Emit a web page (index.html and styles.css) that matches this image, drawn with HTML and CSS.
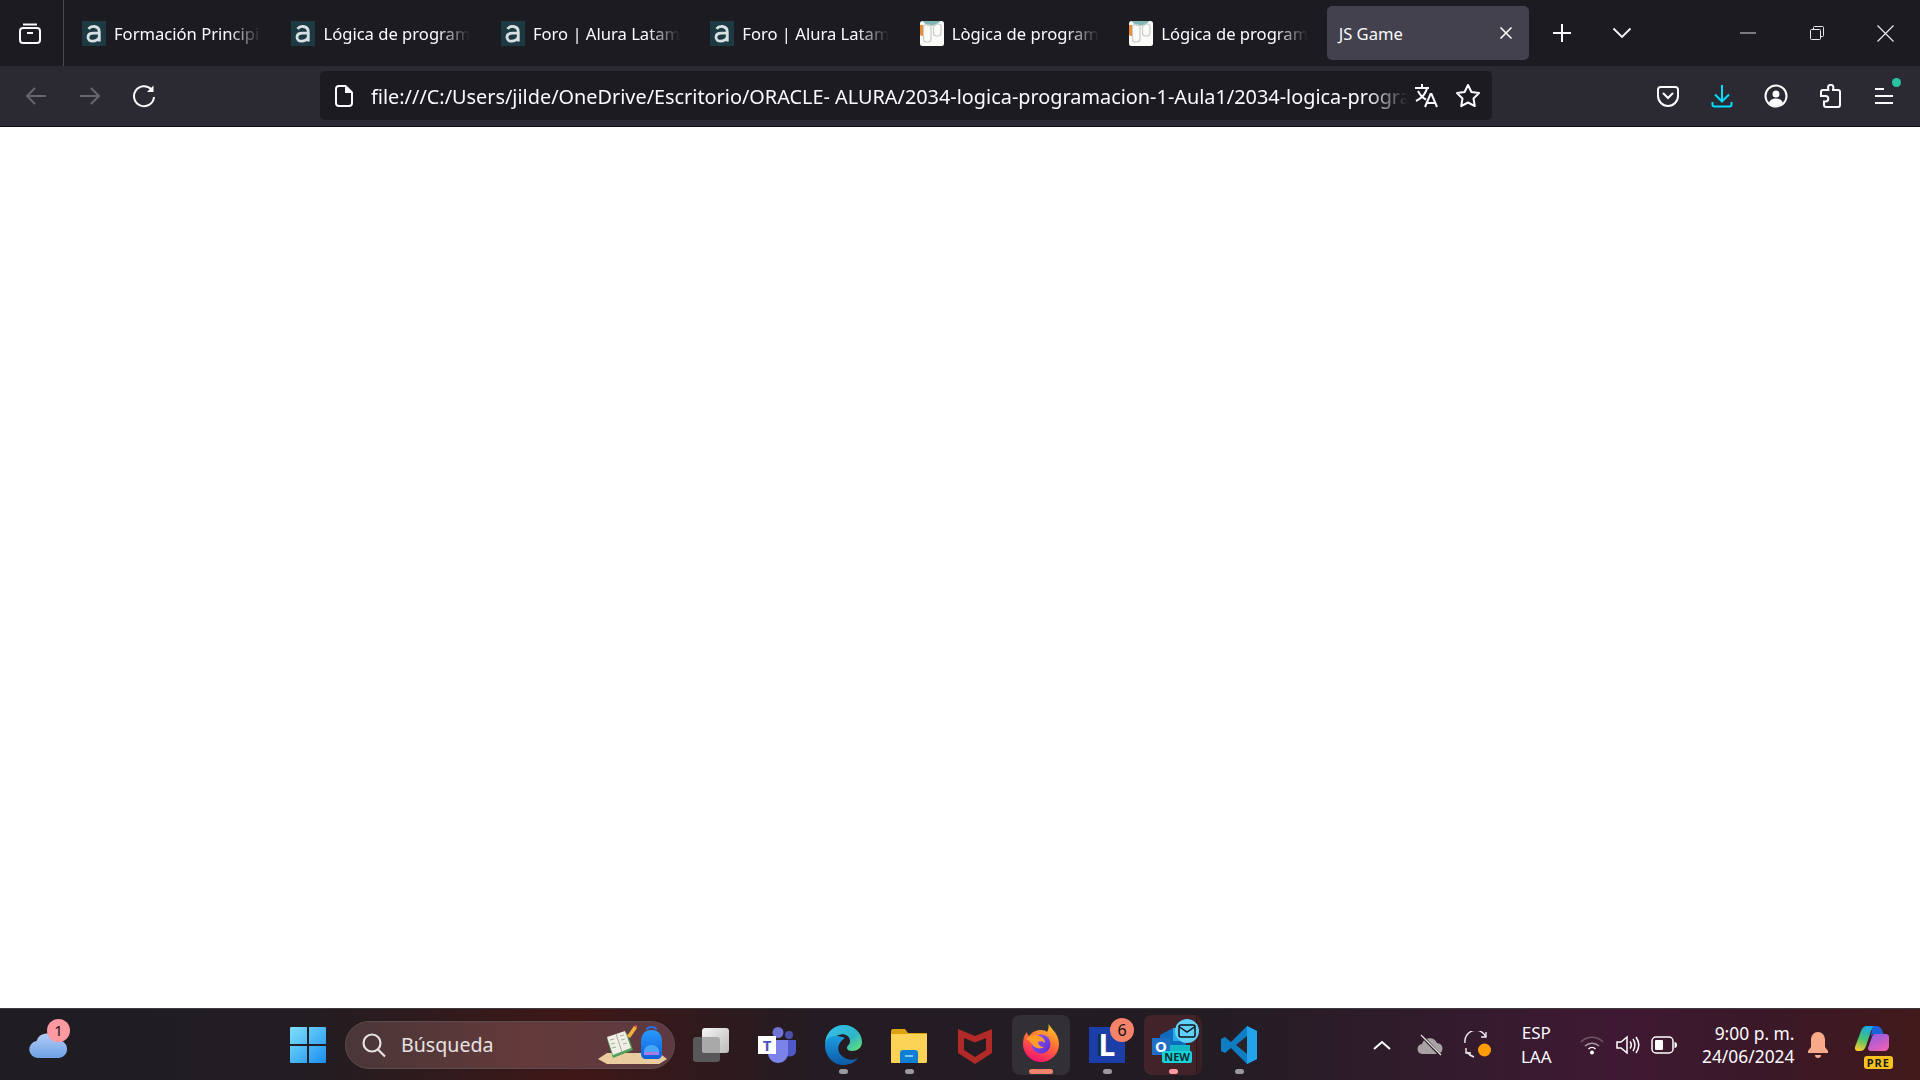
FILE: index.html
```html
<!DOCTYPE html>
<html lang="es">
<head>
    <meta charset="UTF-8">
    <meta name="viewport" content="width=device-width, initial-scale=1.0">
    <title>JS Game</title>
    <link rel="stylesheet" href="styles.css">
</head>
<body>
    <svg class="defs" width="0" height="0">
        <symbol id="alura" viewBox="0 0 24 25">
            <rect width="24" height="25" fill="#1d3a42"/>
            <path d="M6.500 7.800C8 6 10.200 5.300 12.300 5.500c3.200.3 5 2.200 5 5.500v9.500M17.300 12.200H11.500c-3.300 0-5.500 1.500-5.500 4 0 2.500 2 4 4.500 4 3 0 6.800-1.800 6.800-5" fill="none" stroke="#d6e0e2" stroke-width="2.800"/>
        </symbol>
        <symbol id="course" viewBox="0 0 24 25">
            <rect width="24" height="25" rx="2.500" fill="#fbfbf8"/>
            <path d="M2.500 0h18l-5 4.500h-8.500z" fill="#7fb5b5"/>
            <path d="M0 4h3v11H2a2 2 0 0 1-2-2z" fill="#e98a35"/>
            <rect x="3.500" y="3.500" width="7.500" height="17.500" rx="3" fill="none" stroke="#c9cccb" stroke-width="1.200"/>
            <rect x="13.500" y="3" width="7.500" height="12" rx="3" fill="none" stroke="#c9cccb" stroke-width="1.200"/>
        </symbol>
    </svg>

    <header class="tabbar">
        <div class="tabs-view">
            <svg width="24" height="24" viewBox="0 0 24 24" fill="none" stroke="#fbfbfe" stroke-width="2"><path d="M5 3.500h14"/><rect x="2" y="7" width="20" height="15" rx="3"/><path d="M9 12h6"/></svg>
        </div>
        <div class="tabs">
            <div class="tab"><svg class="favicon"><use href="#alura"/></svg><span class="tab-label">Formación Principiante</span></div>
            <div class="tab"><svg class="favicon"><use href="#alura"/></svg><span class="tab-label">Lógica de programación</span></div>
            <div class="tab"><svg class="favicon"><use href="#alura"/></svg><span class="tab-label">Foro | Alura Latam</span></div>
            <div class="tab"><svg class="favicon"><use href="#alura"/></svg><span class="tab-label">Foro | Alura Latam</span></div>
            <div class="tab"><svg class="favicon"><use href="#course"/></svg><span class="tab-label">Lògica de programación</span></div>
            <div class="tab"><svg class="favicon"><use href="#course"/></svg><span class="tab-label">Lógica de programación</span></div>
            <div class="tab tab-active">
                <span class="tab-title">JS Game</span>
                <svg width="14" height="14" viewBox="0 0 14 14" stroke="#fbfbfe" stroke-width="1.600"><path d="M1.500 1.500l11 11M12.500 1.500l-11 11"/></svg>
            </div>
        </div>
        <div class="tab-btn tab-btn-new">
            <svg width="20" height="20" viewBox="0 0 20 20" stroke="#fbfbfe" stroke-width="2"><path d="M10 1v18M1 10h18"/></svg>
        </div>
        <div class="tab-btn tab-btn-list">
            <svg width="20" height="12" viewBox="0 0 20 12" fill="none" stroke="#fbfbfe" stroke-width="1.800"><path d="M1.500 1.500l8.500 8.500 8.500-8.500"/></svg>
        </div>
        <div class="window-controls">
            <div class="win-btn"><svg width="16" height="2" viewBox="0 0 16 2" stroke="#d8d8da"><path d="M0 1h16"/></svg></div>
            <div class="win-btn"><svg width="16" height="16" viewBox="0 0 16 16" fill="none" stroke="#e8e8ea"><rect x="1.500" y="4.500" width="10" height="10" rx="1"/><path d="M4.500 4.500v-2a1 1 0 0 1 1-1h8a1 1 0 0 1 1 1v8a1 1 0 0 1-1 1h-2"/></svg></div>
            <div class="win-btn"><svg width="17" height="17" viewBox="0 0 17 17" stroke="#f0f0f2" stroke-width="1.100"><path d="M.5.500l16 16M16.500.500l-16 16"/></svg></div>
        </div>
    </header>

    <nav class="toolbar">
        <div class="tool-btn">
            <svg width="22" height="20" viewBox="0 0 22 20" fill="none" stroke="#66666c" stroke-width="2"><path d="M21 10H2M10 2l-8 8 8 8"/></svg>
        </div>
        <div class="tool-btn">
            <svg width="22" height="20" viewBox="0 0 22 20" fill="none" stroke="#66666c" stroke-width="2"><path d="M1 10h19M12 2l8 8-8 8"/></svg>
        </div>
        <div class="tool-btn">
            <svg width="24" height="24" viewBox="0 0 24 24" fill="none" stroke="#fbfbfe" stroke-width="2"><path d="M19.500 5.500A10 10 0 1 0 22 13"/><path d="M21.500 1.500v6.500h-6.500z" fill="#fbfbfe" stroke="none"/></svg>
        </div>
        <div class="urlbar">
            <svg class="url-page" width="18" height="22" viewBox="0 0 18 22" fill="none" stroke="#fbfbfe" stroke-width="2"><path d="M4 1h6.500L17 7.500V18a3 3 0 0 1-3 3H4a3 3 0 0 1-3-3V4a3 3 0 0 1 3-3z"/><path d="M10 1v7h7" fill="#fbfbfe" stroke="none"/></svg>
            <span class="url-text">file:///C:/Users/jilde/OneDrive/Escritorio/ORACLE- ALURA/2034-logica-programacion-1-Aula1/2034-logica-programacion-1-Aula1/index.html</span>
            <svg class="url-translate" width="25" height="25" viewBox="0 0 25 25" fill="none" stroke="#fbfbfe" stroke-width="2"><path d="M1 5h14M8 1v4M13 5c-1 5-5 10-11 13M4 8c2 4 5 7 8 8.500M11 24l5.500-13h1L23 24M13 20h8"/></svg>
            <svg class="url-star" width="26" height="25" viewBox="0 0 26 25" fill="none" stroke="#fbfbfe" stroke-width="2" stroke-linejoin="round"><path d="M13 2l3.400 7 7.600 1.100-5.500 5.400 1.300 7.600-6.800-3.600-6.800 3.600 1.300-7.600L2 10.100 9.600 9z"/></svg>
        </div>
        <div class="tool-actions">
            <div class="tool-btn">
                <svg width="22" height="22" viewBox="0 0 22 22" fill="none" stroke="#fbfbfe" stroke-width="2"><path d="M3.500 2h15A2.500 2.500 0 0 1 21 4.500V11a10 10 0 0 1-20 0V4.500A2.500 2.500 0 0 1 3.500 2z"/><path d="M6.500 8.500L11 13l4.500-4.500" stroke-linecap="round"/></svg>
            </div>
            <div class="tool-btn">
                <svg width="22" height="24" viewBox="0 0 22 24" fill="none" stroke="#00ddff" stroke-width="2"><path d="M11 1v16M4 10.500l7 7 7-7"/><path d="M1.500 18v2.500a2 2 0 0 0 2 2h15a2 2 0 0 0 2-2V18"/></svg>
            </div>
            <div class="tool-btn">
                <svg width="24" height="24" viewBox="0 0 24 24" fill="none" stroke="#fbfbfe" stroke-width="2"><circle cx="12" cy="12" r="10.500"/><circle cx="12" cy="10" r="3.500" fill="#fbfbfe" stroke="none"/><path d="M5 19c1-3.500 4-4.500 7-4.500s6 1 7 4.500c-2 2-4.500 3-7 3s-5-1-7-3z" fill="#fbfbfe" stroke="none"/></svg>
            </div>
            <div class="tool-btn">
                <svg width="22" height="24" viewBox="0 0 22 24" fill="none" stroke="#fbfbfe" stroke-width="2"><path d="M9 3.500a2.700 2.700 0 0 1 5.400 0c0 1-.4 1.500-.4 2.500h5a2 2 0 0 1 2 2v13a2 2 0 0 1-2 2H7a2 2 0 0 1-2-2v-3.500h1.500a2.700 2.700 0 0 0 0-5.500H2v-4a2 2 0 0 1 2-2h5.400c0-1-.4-1.500-.4-2.500z"/></svg>
            </div>
            <div class="tool-btn menu-btn">
                <svg width="20" height="18" viewBox="0 0 20 18" stroke="#fbfbfe" stroke-width="2"><path d="M1 2h9M1 9h18M1 16h18"/></svg>
                <span class="menu-dot"></span>
            </div>
        </div>
    </nav>

    <main class="viewport"></main>

    <footer class="taskbar">
        <div class="weather">
            <svg width="38" height="26" viewBox="0 0 38 26"><defs><linearGradient id="cloud" x1="0" y1="0" x2="0" y2="1"><stop offset="0" stop-color="#b4ccf5"/><stop offset="1" stop-color="#6ea1e6"/></linearGradient></defs><path d="M9 26a8.500 8.500 0 0 1-1.500-16.900A11 11 0 0 1 28 8a9 9 0 0 1 2 18z" fill="url(#cloud)"/></svg>
            <span class="weather-badge">1</span>
        </div>
        <div class="task-btn task-start">
            <svg width="36" height="36" viewBox="0 0 36 36"><defs><linearGradient id="win" x1="0" y1="0" x2="1" y2="1"><stop offset="0" stop-color="#7fe0fb"/><stop offset="1" stop-color="#1a8ff0"/></linearGradient></defs><path d="M1 0h16v17H0V1a1 1 0 0 1 1-1zM19 0h16a1 1 0 0 1 1 1v16H19zM0 19h17v17H1a1 1 0 0 1-1-1zM19 19h17v16a1 1 0 0 1-1 1H19z" fill="url(#win)"/></svg>
        </div>
        <div class="search">
            <svg width="26" height="26" viewBox="0 0 26 26" fill="none" stroke="#e8e2e2" stroke-width="2.200"><circle cx="11" cy="11" r="8.500"/><path d="M17 17.500l7 7"/></svg>
            <span class="search-label">Búsqueda</span>
            <svg class="search-art" width="72" height="42" viewBox="0 0 72 42">
                <defs><linearGradient id="bag" x1="0" y1="0" x2="0" y2="1"><stop offset="0" stop-color="#2a9bff"/><stop offset="1" stop-color="#0e5ed8"/></linearGradient></defs>
                <path d="M1 35l9-6h52l8 6-8 5H10z" fill="#e9cd9e"/>
                <path d="M10 15l20-6 6 17-20 8z" fill="#4ea05a"/>
                <path d="M10 13l18-6 6 17-18 7z" fill="#f1eee6"/>
                <path d="M19 10l6 18M13 16l4-1M14 20l4-1M15 24l4-1M23 12l4-1M24 16l4-1M26 20l4-1" stroke="#a8aaa4" fill="none"/>
                <path d="M30 12l7-10 3 2-7 10z" fill="#f5b13d"/>
                <path d="M37 2l3-1v3z" fill="#e25c4a"/>
                <path d="M50 6c0-4 9-4 9 0" fill="none" stroke="#2a6fe0" stroke-width="2"/>
                <path d="M44 18c0-8 4-12 10.500-12S65 10 65 18v12c0 3-2 5-5 5H49c-3 0-5-2-5-5z" fill="url(#bag)"/>
                <path d="M47 27c1-8 14-8 15 0v2H47z" fill="#46a6f7"/>
                <path d="M47 28h15v3H47z" fill="#a77be8"/>
            </svg>
        </div>
        <div class="task-btn task-first">
            <svg width="36" height="34" viewBox="0 0 36 34"><defs><linearGradient id="tview" x1="0" y1="0" x2="1" y2="1"><stop offset="0" stop-color="#f4f4f4"/><stop offset="1" stop-color="#bcbcbc"/></linearGradient></defs><rect x="0" y="9" width="27" height="25" rx="3" fill="#58585a"/><rect x="9" y="0" width="27" height="25" rx="3" fill="url(#tview)"/><path d="M9 9h15a3 3 0 0 1 3 3v13H12a3 3 0 0 1-3-3z" fill="#a9a9a9"/></svg>
        </div>
        <div class="task-btn">
            <svg width="38" height="36" viewBox="0 0 38 36"><circle cx="20" cy="5.500" r="5.500" fill="#6f73d2"/><circle cx="31" cy="8" r="4" fill="#4a4fb0"/><path d="M28 13h10v11a6 6 0 0 1-10 4z" fill="#5059c9"/><path d="M10 13h20v13a9.500 9.500 0 0 1-9.500 10C15 36 10 32 10 26z" fill="#7b83eb"/><rect x="0" y="9" width="18" height="18" fill="#fff"/><text class="teams-t" x="9" y="24" text-anchor="middle">T</text></svg>
        </div>
        <div class="task-btn task-dot">
            <svg width="38" height="40" viewBox="0 0 38 40"><defs><linearGradient id="edge1" x1="0" y1="0" x2="1" y2="1"><stop offset="0" stop-color="#35c1f1"/><stop offset=".6" stop-color="#2fb4c6"/><stop offset="1" stop-color="#66eb6e"/></linearGradient><linearGradient id="edge2" x1="0" y1="0" x2="0" y2="1"><stop offset="0" stop-color="#1b9de2"/><stop offset="1" stop-color="#0c59a4"/></linearGradient></defs><path d="M1 20C1 8 9 0 20 0c10 0 18 8 18 17 0 6-5 9-10 9-3 0-5-1-5-3 0-3 3-3 3-7 0-5-6-8-11-6C7 13 2 14 1 20z" fill="url(#edge1)"/><path d="M1 20c0 11 8 20 18 20 6 0 11-2 15-7-5 3-12 2-16-2-4-3-5-9-2-13 1-2 3-4 5-5C10 9 2 11 1 20z" fill="url(#edge2)"/></svg>
        </div>
        <div class="task-btn task-dot">
            <svg width="36" height="36" viewBox="0 0 36 36"><path d="M0 4a2 2 0 0 1 2-2h12l3 4h19v28a2 2 0 0 1-2 2H0z" fill="#dba10f"/><path d="M0 7h36v27a2 2 0 0 1-2 2H2a2 2 0 0 1-2-2z" fill="#fcd257"/><path d="M9 36V26a3 3 0 0 1 3-3h12a3 3 0 0 1 3 3v10z" fill="#0f7fd6"/><path d="M14 29h8" stroke="#7cc6f5" stroke-width="2"/></svg>
        </div>
        <div class="task-btn">
            <svg width="34" height="38" viewBox="0 0 34 38"><path d="M0 3l17 7 17-7v24l-17 11L0 27zM6 12v12l11 7 11-7V12l-11 4.500z" fill="#b22a27"/></svg>
        </div>
        <div class="task-btn task-firefox task-bar">
            <svg class="fox-icon" width="36" height="40" viewBox="0 0 36 40">
                <defs>
                    <linearGradient id="fox" x1=".8" y1="0" x2=".4" y2="1"><stop offset="0" stop-color="#ffd22e"/><stop offset=".45" stop-color="#ff7a30"/><stop offset="1" stop-color="#f5156c"/></linearGradient>
                    <linearGradient id="foxin" x1="0" y1="0" x2="1" y2="1"><stop offset="0" stop-color="#9059ff"/><stop offset="1" stop-color="#5b2bc8"/></linearGradient>
                </defs>
                <path d="M25 0c0 5 11 10 11 22a18 18 0 0 1-36 0c0-5 1-9 4-12 0 2 1 3 2 4 2-3 5-5 10-6 2 0 6 0 8 2 2-3 2-7 1-10z" fill="url(#fox)"/>
                <circle cx="18" cy="22" r="9.500" fill="url(#foxin)"/>
                <path d="M3 17c4-4 9-5 13-3 4 1 6 4 6 7-2-2-5-2-7-1 0 3 3 5 6 5-4 3-10 1-12-3-1-2-3-3-6-5z" fill="#ff9d2b"/>
            </svg>
        </div>
        <div class="task-btn task-dot">
            <div class="lapp">L</div>
            <span class="task-badge">6</span>
        </div>
        <div class="task-btn task-outlook">
            <svg width="42" height="40" viewBox="0 0 42 40"><path d="M8 10l13-7h13v24H8z" fill="#0f6cbd"/><path d="M21 3h13v13H21z" fill="#28a8ea"/><path d="M14 20h24v16H14z" fill="#14b8c4"/><rect x="0" y="13" width="18" height="17" rx="1" fill="#1f6fc4"/><text class="outlook-o" x="9" y="27" text-anchor="middle">O</text></svg>
            <span class="outlook-mail"><svg width="18" height="14" viewBox="0 0 18 14" fill="none" stroke="#111" stroke-width="1.500"><rect x="1" y="1" width="16" height="12" rx="2"/><path d="M1.500 3L9 8l7.500-5"/></svg></span>
            <span class="outlook-new">NEW</span>
        </div>
        <div class="task-btn task-dot">
            <svg width="36" height="38" viewBox="0 0 36 38"><path d="M26 0l10 5v28l-10 5-16-16-6 5-4-2V13l4-2 6 5z" fill="#0f7dc4"/><path d="M26 0l10 5v28l-10 5z" fill="#23a3ea"/><path d="M26 10v18l-11-9z" fill="#2a2328"/></svg>
        </div>

        <div class="tray">
            <div class="tray-item">
                <svg width="18" height="10" viewBox="0 0 18 10" fill="none" stroke="#fff" stroke-width="2"><path d="M1 9l8-7 8 7"/></svg>
            </div>
            <div class="tray-item">
                <svg width="26" height="24" viewBox="0 0 26 24"><path d="M6 21a5 5 0 0 1-1-10 8 8 0 0 1 15-1 5.500 5.500 0 0 1 0 11z" fill="#a9a2a4"/><path d="M4 2l19 20" stroke="#2b1b24" stroke-width="3"/><path d="M4 2l20 20" stroke="#e6e2e2" stroke-width="1.300"/></svg>
            </div>
            <div class="tray-item">
                <svg width="28" height="28" viewBox="0 0 28 28" fill="none" stroke="#f0eeee" stroke-width="1.400"><path d="M1 12A11 11 0 0 1 22 6M22 1v5h-5M2 17v5h5"/><path d="M3 21c2 3 4 4 7 5"/><circle cx="20.500" cy="19" r="6.500" fill="#ff9c0a" stroke="none"/></svg>
            </div>
            <div class="tray-lang"><span>ESP</span><span>LAA</span></div>
            <div class="tray-net">
                <svg width="24" height="20" viewBox="0 0 24 20" fill="none" stroke="#6d5a66" stroke-width="1.500"><path d="M1 7a15 15 0 0 1 22 0"/><path d="M5 11a10 10 0 0 1 14 0" stroke="#a79aa2"/><path d="M8.500 14a5 5 0 0 1 7 0" stroke="#fff"/><circle cx="12" cy="17.500" r="2" fill="#fff" stroke="none"/></svg>
            </div>
            <div class="tray-net">
                <svg width="24" height="20" viewBox="0 0 24 20" fill="none" stroke="#fff" stroke-width="1.500"><path d="M1 7v6h4l6 5V2L5 7z"/><path d="M14 6.500c1.500 2 1.500 5 0 7M17 4c2.500 3.500 2.500 8.500 0 12M20 2c3.500 5 3.500 11 0 16"/></svg>
            </div>
            <div class="tray-net">
                <svg width="26" height="18" viewBox="0 0 26 18"><rect x="1" y="1" width="21" height="16" rx="4" fill="none" stroke="#fff" stroke-width="1.500"/><rect x="4" y="4" width="8" height="10" rx="1" fill="#fff"/><path d="M23.500 6c1.500 0 2.500 1 2.500 3s-1 3-2.500 3z" fill="#fff"/></svg>
            </div>
            <div class="clock"><span>9:00 p. m.</span><span>24/06/2024</span></div>
            <div class="bell">
                <svg width="22" height="26" viewBox="0 0 22 26"><path d="M11 0c4 0 7 3 7 8v7l3 4v2H1v-2l3-4V8c0-5 3-8 7-8z" fill="#f7a98a"/><path d="M8 23h6c0 2-1 3-3 3s-3-1-3-3z" fill="#f7a98a"/></svg>
            </div>
            <div class="copilot">
                <svg width="34" height="26" viewBox="0 0 34 26">
                    <defs>
                        <linearGradient id="cop1" x1=".3" y1="1" x2=".6" y2="0"><stop offset="0" stop-color="#f5c92e"/><stop offset=".45" stop-color="#45c470"/><stop offset="1" stop-color="#1aa6ee"/></linearGradient>
                        <linearGradient id="cop2" x1=".2" y1="0" x2=".8" y2="1"><stop offset="0" stop-color="#8f5fe6"/><stop offset="1" stop-color="#f25fb0"/></linearGradient>
                    </defs>
                    <path d="M12 0h10c-3 .5-5 2.500-6 5l-5 15c-1 3-3 5-6 5H3c-2.500 0-3.500-2-3-4L6 5c1-3 3-5 6-5z" fill="url(#cop1)"/>
                    <path d="M18 0h3c3 0 5 1.500 6 4l1.500 4H20c-2 0-3.500 1-4.500 3z" fill="#1d62d8"/>
                    <path d="M20 8h11c2 0 3 1.500 3 3v9c0 3-2 5-5 5H16c-2 0-3-1-3-3l4-11c.5-2 1.500-3 3-3z" fill="url(#cop2)"/>
                </svg>
                <span class="copilot-pre">PRE</span>
            </div>
        </div>
    </footer>
</body>
</html>
```

FILE: styles.css
```css
* {
    box-sizing: border-box;
}
body {
    margin: 0;
    height: 1080px;
    overflow: hidden;
    display: flex;
    flex-direction: column;
    background-color: #fff;
    font-family: "Noto Sans", "Open Sans", sans-serif;
    color: #fbfbfe;
}
.defs {
    position: absolute;
}

/* tab strip */
.tabbar {
    height: 66px;
    flex: none;
    display: flex;
    align-items: center;
    background-color: #1c1b22;
}
.tabs-view {
    width: 64px;
    height: 66px;
    flex: none;
    display: flex;
    align-items: center;
    padding-left: 18px;
    border-right: 1px solid #4a4a50;
}
.tabs {
    display: flex;
    gap: 7.450px;
    margin-left: 6px;
}
.tab {
    width: 202px;
    height: 54px;
    padding-left: 12px;
    display: flex;
    align-items: center;
    gap: 8px;
    border-radius: 5px;
}
.favicon {
    width: 24px;
    height: 25px;
    flex: none;
}
.tab-label {
    width: 147px;
    overflow: hidden;
    white-space: nowrap;
    font-size: 16.600px;
    -webkit-mask-image: linear-gradient(to right, #000 78%, transparent 100%);
    mask-image: linear-gradient(to right, #000 78%, transparent 100%);
}
.tab-active {
    background-color: #42414d;
    padding: 0 16px 0 12px;
    justify-content: space-between;
}
.tab-title {
    font-size: 16.600px;
}
.tab-btn {
    width: 48px;
    height: 48px;
    flex: none;
    display: flex;
    align-items: center;
    justify-content: center;
}
.tab-btn-new {
    margin-left: 9px;
}
.tab-btn-list {
    margin-left: 12px;
}
.window-controls {
    margin-left: auto;
    display: flex;
}
.win-btn {
    width: 69px;
    height: 66px;
    display: flex;
    align-items: center;
    justify-content: center;
}

/* navigation toolbar */
.toolbar {
    height: 61px;
    flex: none;
    display: flex;
    align-items: center;
    padding: 0 9px 1px;
    background-color: #2b2a33;
    border-bottom: 1px solid #0c0c0f;
}
.tool-btn {
    width: 54px;
    height: 48px;
    flex: none;
    display: flex;
    align-items: center;
    justify-content: center;
}
.urlbar {
    width: 1172px;
    height: 49px;
    margin-left: 149px;
    flex: none;
    display: flex;
    align-items: center;
    padding: 0 10px 0 15px;
    background-color: #1c1b22;
    border-radius: 5px;
}
.url-page {
    flex: none;
}
.url-text {
    width: 1037px;
    margin-left: 18px;
    padding-top: 2px;
    flex: none;
    overflow: hidden;
    white-space: nowrap;
    font-size: 19.860px;
    -webkit-mask-image: linear-gradient(to right, #000 96%, transparent 100%);
    mask-image: linear-gradient(to right, #000 96%, transparent 100%);
}
.url-translate {
    flex: none;
    margin-left: 6px;
}
.url-star {
    flex: none;
    margin-left: 16px;
}
.tool-actions {
    margin-left: auto;
    display: flex;
}
.menu-btn {
    position: relative;
}
.menu-dot {
    position: absolute;
    top: 6px;
    right: 10px;
    width: 9px;
    height: 9px;
    border-radius: 50%;
    background-color: #2ac3a2;
}

/* page */
.viewport {
    flex: 1;
    background-color: #fff;
}

/* windows taskbar */
.taskbar {
    height: 72px;
    flex: none;
    display: flex;
    align-items: center;
    padding: 0 24px 0 18px;
    border-top: 1px solid #3d3a3e;
    background: linear-gradient(to right, #1f1d22 0%, #221d22 16%, #3f1717 30%, #241c22 42%, #221c22 62%, #2e1c2a 72%, #3f1933 84%, #3a1827 92%, #421a1c 100%);
}
.weather {
    width: 60px;
    height: 60px;
    flex: none;
    position: relative;
    display: flex;
    align-items: center;
    justify-content: center;
}
.weather-badge {
    position: absolute;
    top: 4px;
    right: 8px;
    width: 23px;
    height: 23px;
    border-radius: 50%;
    background-color: #ff9aa2;
    color: #111;
    font-size: 15px;
    line-height: 23px;
    text-align: center;
}
.task-btn {
    width: 58px;
    height: 60px;
    flex: none;
    position: relative;
    display: flex;
    align-items: center;
    justify-content: center;
    border-radius: 8px;
}
.task-start {
    margin-left: 201px;
}
.task-first {
    margin-left: 7px;
}
.task-btn + .task-btn {
    margin-left: 8px;
}
.task-dot::after,
.task-bar::after,
.task-outlook::after {
    content: "";
    position: absolute;
    bottom: 1px;
    left: 50%;
    width: 9px;
    height: 5px;
    margin-left: -4.500px;
    border-radius: 3px;
    background-color: #9a9a9e;
}
.task-bar::after {
    width: 24px;
    margin-left: -12px;
    background-color: #f0836a;
}
.task-outlook::after {
    background-color: #ff9aa2;
}
.task-firefox {
    background-color: #322f35;
}
.fox-icon {
    margin-top: -6px;
}
.task-outlook {
    background: linear-gradient(to right, #42232a 52px, #2b181c 52px, #2b181c 53px, #3a2024 53px);
}
.search {
    width: 330px;
    height: 48px;
    margin-left: 8px;
    flex: none;
    position: relative;
    display: flex;
    align-items: center;
    padding-left: 15px;
    border-radius: 24px;
    border: 1px solid #5a4c4e;
    background: linear-gradient(to right, #4a3638, #643a3a 55%, #5d3a42);
}
.search-label {
    margin-left: 14px;
    font-size: 19.600px;
    color: #e8e2e2;
}
.search-art {
    position: absolute;
    right: 5px;
    top: 2px;
}
.teams-t {
    font-size: 15px;
    font-weight: 700;
    fill: #4b53bc;
}
.lapp {
    width: 36px;
    height: 36px;
    background-color: #1c3ea8;
    color: #fff;
    font-size: 30px;
    font-weight: 700;
    line-height: 36px;
    text-align: center;
    text-shadow: -3px 0 0 #10304f;
}
.task-badge {
    position: absolute;
    top: 3px;
    right: 2px;
    width: 24px;
    height: 24px;
    border-radius: 50%;
    background-color: #f5836a;
    color: #111;
    font-size: 16px;
    line-height: 24px;
    text-align: center;
}
.outlook-o {
    font-size: 15px;
    font-weight: 700;
    fill: #fff;
}
.outlook-mail {
    position: absolute;
    top: 4px;
    right: 3px;
    width: 24px;
    height: 24px;
    border-radius: 50%;
    background-color: #5fd0fb;
    display: flex;
    align-items: center;
    justify-content: center;
}
.outlook-new {
    position: absolute;
    right: 10px;
    bottom: 12px;
    padding: 0 2px;
    border-radius: 2px;
    background-color: #17d3d8;
    color: #0b2e33;
    font-size: 11px;
    font-weight: 700;
    line-height: 12px;
}

/* tray */
.tray {
    margin-left: auto;
    display: flex;
    align-items: center;
}
.tray-item {
    width: 48px;
    height: 48px;
    display: flex;
    align-items: center;
    justify-content: center;
}
.tray-lang {
    width: 71.500px;
    padding-right: 3px;
    display: flex;
    flex-direction: column;
    align-items: center;
    font-size: 17px;
    line-height: 24px;
}
.tray-net {
    width: 36px;
    display: flex;
    justify-content: center;
}
.clock {
    width: 113px;
    display: flex;
    flex-direction: column;
    align-items: flex-end;
    font-size: 17.400px;
    line-height: 23px;
    white-space: nowrap;
}
.bell {
    width: 46px;
    display: flex;
    justify-content: center;
}
.copilot {
    width: 48px;
    height: 48px;
    margin-left: 7.500px;
    position: relative;
    display: flex;
    justify-content: center;
    padding-top: 5px;
}
.copilot-pre {
    position: absolute;
    bottom: 0;
    right: 3px;
    padding: 0 3px;
    border-radius: 3px;
    background-color: #f7c21e;
    color: #1a1a1a;
    font-size: 11px;
    font-weight: 700;
    letter-spacing: 1px;
    line-height: 13px;
}
```
